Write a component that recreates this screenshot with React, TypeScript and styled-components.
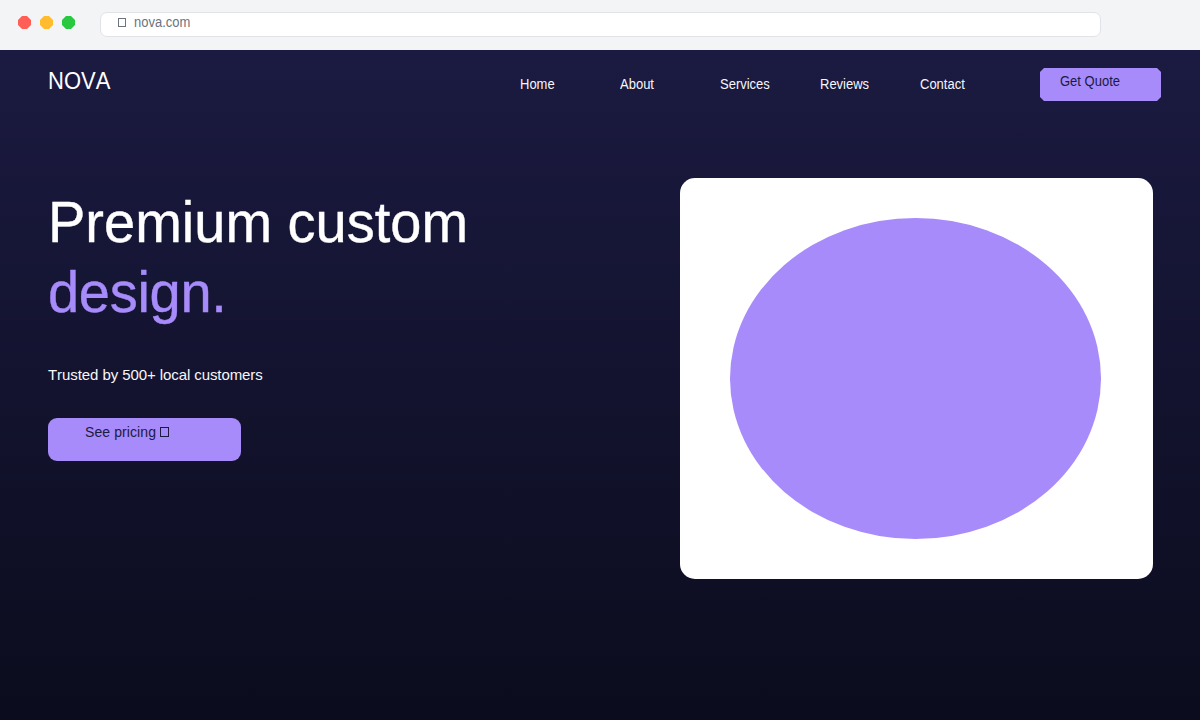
import React from "react";
import styled, { createGlobalStyle } from "styled-components";

const GlobalStyle = createGlobalStyle`
  *, *::before, *::after { box-sizing: border-box; }
  body {
    margin: 0;
    font-family: "Liberation Sans", Arial, Helvetica, sans-serif;
    font-weight: 400;
    font-kerning: none;
  }
`;

const Page = styled.div`
  display: flex;
  flex-direction: column;
  width: 1200px;
  height: 720px;
  overflow: hidden;
`;

const BrowserBar = styled.div`
  display: flex;
  align-items: flex-start;
  height: 50px;
  padding: 12px 99px 0 18px;
  background: #f3f4f6;
`;

const WindowControls = styled.div`
  display: flex;
  gap: 9px;
  width: 82px;
  padding-top: 4px;
`;

const ControlDot = styled.span<{ $color: string }>`
  width: 13px;
  height: 13px;
  background: ${({ $color }) => $color};
  clip-path: polygon(4px 0, 9px 0, 13px 4px, 13px 9px, 9px 13px, 4px 13px, 0 9px, 0 4px);
`;

const AddressBar = styled.div`
  display: flex;
  flex: 1;
  height: 25px;
  padding: 2px 17px 0;
  border: 1px solid #e1e3e8;
  border-radius: 7px;
  background: #fff;
  color: #6b7280;
  font-size: 13px;
  line-height: 16px;
`;

/* Condensed lettering: slightly taller than the face's natural proportions. */
const TallText = styled.span`
  display: inline-block;
  transform: scaleY(1.08);
  transform-origin: 0 80%;
`;

const GlyphBox = styled.span<{ $width: number; $height: number }>`
  display: inline-block;
  width: ${({ $width }) => $width}px;
  height: ${({ $height }) => $height}px;
  border: 1px solid currentColor;
`;

const AddressGlyph = styled(GlyphBox)`
  margin: 3px 8px 0 0;
`;

const Site = styled.div`
  flex: 1;
  background: linear-gradient(180deg, #1b1a41 0%, #0b0c1d 100%);
`;

const Header = styled.header`
  display: flex;
  align-items: flex-start;
  height: 128px;
  padding: 18px 39px 0 48px;
`;

const Logo = styled.div`
  width: 472px;
  padding-top: 1px;
  color: #fff;
  font-size: 22px;
  line-height: 26px;
`;

const Nav = styled.nav`
  display: grid;
  grid-template-columns: repeat(5, 100px);
  width: 520px;
  padding-top: 9px;
`;

const NavLink = styled.a`
  color: #f7f7fa;
  font-size: 13px;
  line-height: 16px;
`;

const QuoteButton = styled.button`
  display: flex;
  align-items: flex-start;
  width: 121px;
  height: 33px;
  padding: 6px 20px 0;
  border: 0;
  background: #a78bfa;
  clip-path: polygon(4px 0, 117px 0, 121px 4px, 121px 29px, 117px 33px, 4px 33px, 0 29px, 0 4px);
  color: #1b1a40;
  font: inherit;
  font-size: 13px;
  line-height: 16px;
  white-space: nowrap;
`;

const Hero = styled.main`
  display: flex;
  padding-left: 48px;
`;

const HeroCopy = styled.section`
  display: flex;
  flex-direction: column;
  align-items: flex-start;
  width: 632px;
  padding-top: 10px;
`;

const Headline = styled.h1`
  margin: 0;
  color: #fff;
  font-size: 56px;
  font-weight: 400;
  line-height: 70px;
  -webkit-text-stroke: 0.4px currentColor;
`;

const HeadlineRow = styled.span<{ $accent?: boolean }>`
  display: block;
  color: ${({ $accent }) => ($accent ? "#a78bfa" : "#fff")};
  letter-spacing: ${({ $accent }) => ($accent ? "-0.3px" : "0")};
  transform: scaleY(1.04);
  transform-origin: 0 54px;
`;

const Tagline = styled.p`
  margin: 38px 0 0;
  color: #f7f7fa;
  font-size: 15px;
  letter-spacing: -0.08px;
  line-height: 18px;
`;

const PricingButton = styled.button`
  display: flex;
  width: 193px;
  height: 43px;
  margin-top: 34px;
  padding: 6px 37px 0;
  border: 0;
  border-radius: 9px;
  background: #a78bfa;
  color: #1b1a40;
  font: inherit;
  font-size: 14px;
  letter-spacing: 0.09px;
  line-height: 17px;
  white-space: nowrap;
`;

const PricingGlyph = styled(GlyphBox)`
  margin: 3px 0 0 4px;
`;

const ShowcaseCard = styled.section`
  display: flex;
  width: 473px;
  height: 401px;
  padding: 40px 50px;
  border-radius: 15px;
  background: #fff;
`;

const Ellipse = styled.div`
  width: 371px;
  height: 321px;
  border-radius: 50%;
  background: #a78bfa;
`;

const links = ["Home", "About", "Services", "Reviews", "Contact"];
const controls = ["#ff5f57", "#febc2e", "#28c840"];

export default function App() {
  return (
    <Page>
      <GlobalStyle />
      <BrowserBar>
        <WindowControls>
          {controls.map((color) => (
            <ControlDot key={color} $color={color} />
          ))}
        </WindowControls>
        <AddressBar>
          <AddressGlyph $width={8} $height={9} />
          <TallText>nova.com</TallText>
        </AddressBar>
      </BrowserBar>
      <Site>
        <Header>
          <Logo>
            <TallText>NOVA</TallText>
          </Logo>
          <Nav>
            {links.map((label) => (
              <NavLink key={label}>
                <TallText>{label}</TallText>
              </NavLink>
            ))}
          </Nav>
          <QuoteButton>
            <TallText>Get Quote</TallText>
          </QuoteButton>
        </Header>
        <Hero>
          <HeroCopy>
            <Headline>
              <HeadlineRow>Premium custom</HeadlineRow>
              <HeadlineRow $accent>design.</HeadlineRow>
            </Headline>
            <Tagline>Trusted by 500+ local customers</Tagline>
            <PricingButton>
              See pricing
              <PricingGlyph $width={9} $height={10} />
            </PricingButton>
          </HeroCopy>
          <ShowcaseCard>
            <Ellipse />
          </ShowcaseCard>
        </Hero>
      </Site>
    </Page>
  );
}
